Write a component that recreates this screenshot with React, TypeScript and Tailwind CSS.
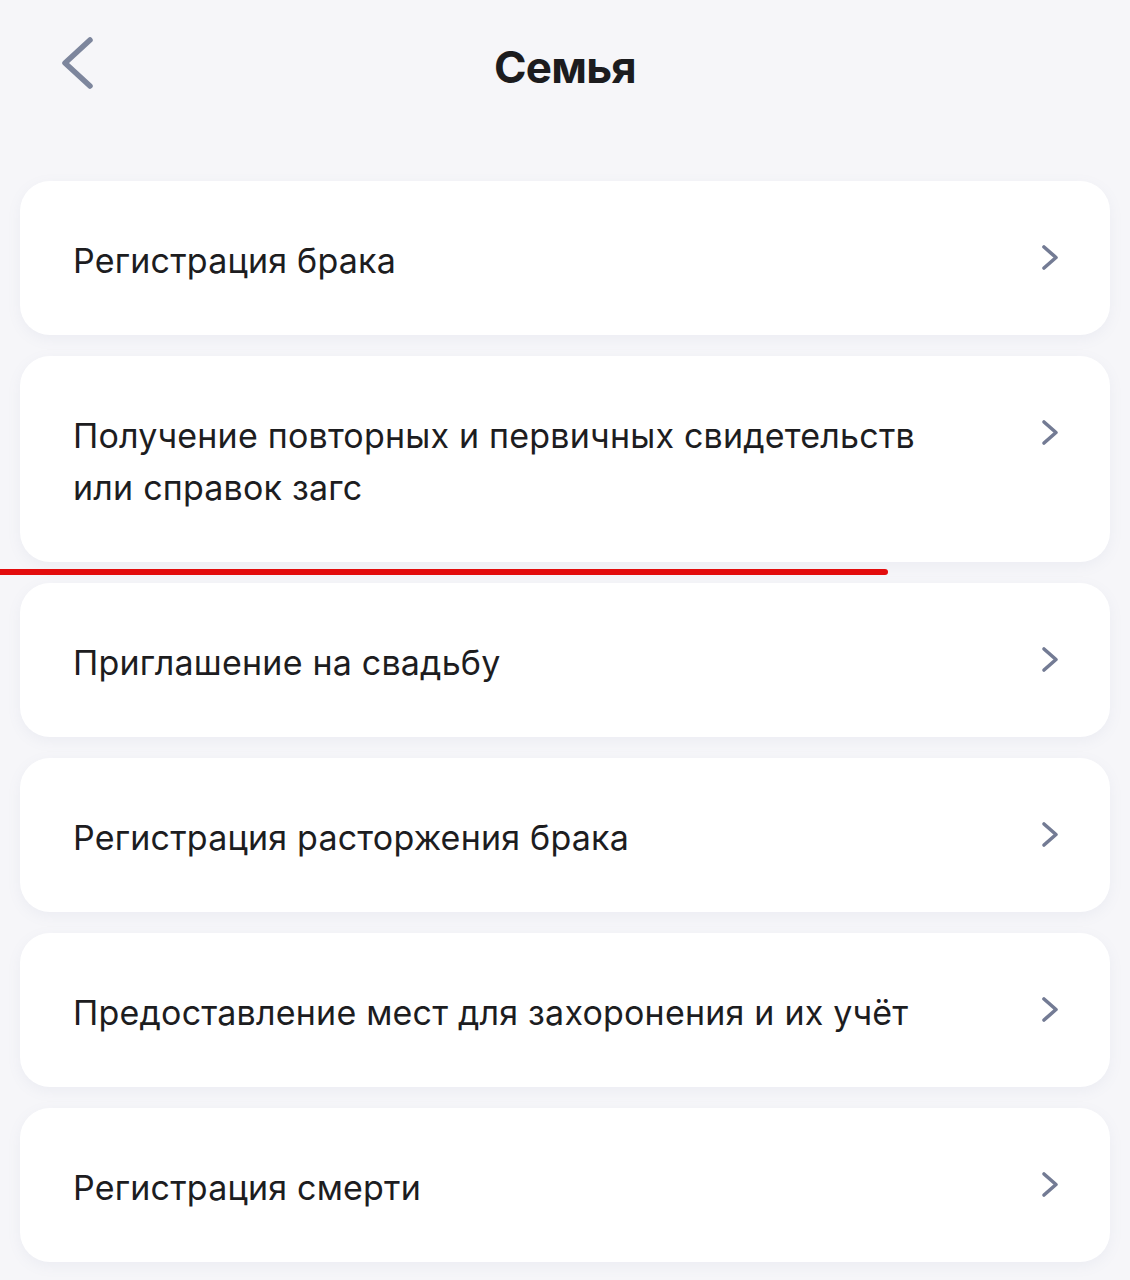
import React from "react";

const items = [
  "Регистрация брака",
  "Получение повторных и первичных свидетельств или справок загс",
  "Приглашение на свадьбу",
  "Регистрация расторжения брака",
  "Предоставление мест для захоронения и их учёт",
  "Регистрация смерти",
];

function ChevronRight() {
  return (
    <svg width="18" height="27" viewBox="0 0 18 27" fill="none" className="mt-[9px] shrink-0">
      <path
        d="M3 3 L15 13.5 L3 24"
        stroke="#737b94"
        strokeWidth="3.6"
        strokeLinecap="round"
        strokeLinejoin="round"
      />
    </svg>
  );
}

function BackIcon() {
  return (
    <svg width="36" height="54" viewBox="0 0 36 54" fill="none">
      <path
        d="M30 4 L5 27 L30 50"
        stroke="#7d869d"
        strokeWidth="5.5"
        strokeLinecap="round"
        strokeLinejoin="round"
      />
    </svg>
  );
}

function ServiceCard({ title, marked }: { title: string; marked?: boolean }) {
  return (
    <div className="relative">
      <div className="flex items-start justify-between gap-6 rounded-[30px] bg-white pb-[48px] pl-[53px] pr-[51px] pt-[54px] shadow-[0_4px_14px_rgba(120,125,160,0.08)]">
        <p className="max-w-[870px] text-[34px] leading-[52px] tracking-[0.2px] text-[#1d1d1f]">{title}</p>
        <ChevronRight />
      </div>
      {marked && (
        <div className="absolute left-[-20px] top-[calc(100%+7px)] h-[6px] w-[888px] rounded-r-full bg-[#e30d0d]" />
      )}
    </div>
  );
}

export default function App() {
  return (
    <div
      className="min-h-[1280px] w-[1130px] overflow-hidden bg-[#f6f6f9] px-[20px]"
      style={{ fontFamily: "Inter, 'Noto Sans', sans-serif" }}
    >
      <header className="relative flex h-[181px] items-start justify-center pt-[36px]">
        <button className="absolute left-[40px] top-[36px]">
          <BackIcon />
        </button>
        <h1 className="text-[44px] font-bold leading-[62px] tracking-[-0.8px] text-[#1c1c1e]">Семья</h1>
      </header>
      <div className="flex flex-col gap-[21px] pb-10">
        {items.map((title, i) => (
          <ServiceCard key={title} title={title} marked={i === 1} />
        ))}
      </div>
    </div>
  );
}
